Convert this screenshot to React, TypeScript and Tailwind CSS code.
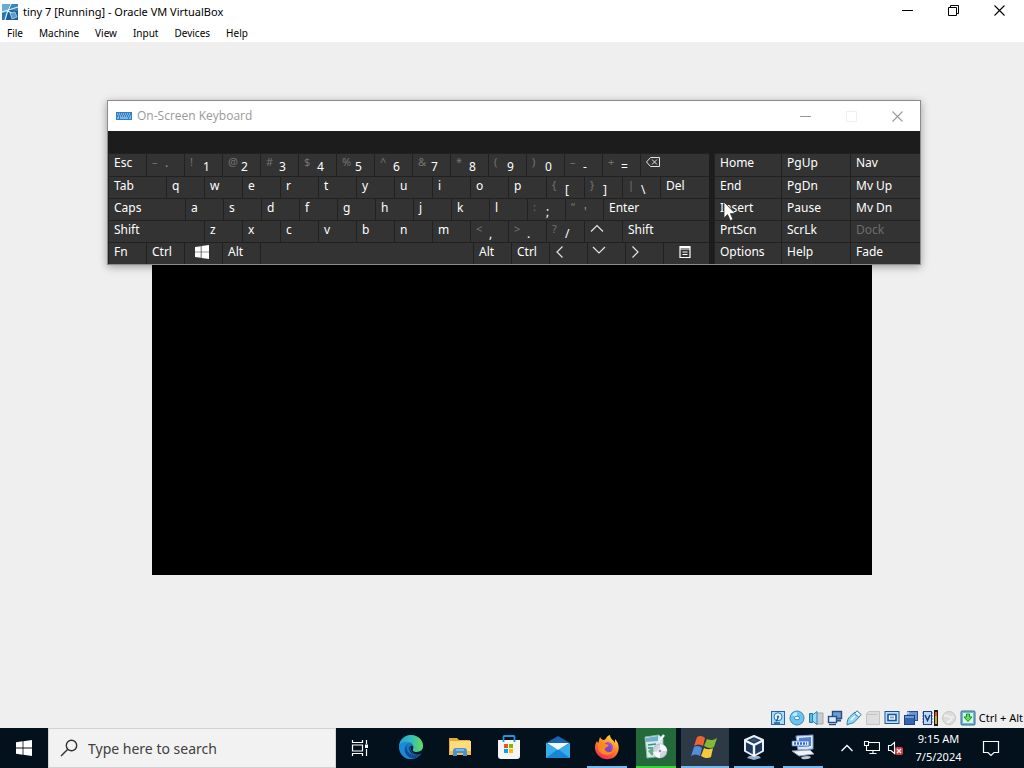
import type { ReactNode } from "react";

type KeyDef = {
  name: string;
  width: string;
  label?: string;
  shifted?: string;
  icon?: ReactNode;
  center?: boolean;
};

const UNIT = "w-[38px]";

const letters = (text: string): KeyDef[] =>
  text.split("").map((c) => ({ name: c, label: c, width: UNIT }));

const pair = (shifted: string, label: string): KeyDef => ({
  name: label,
  label,
  shifted,
  width: UNIT,
});

function Chevron({ d }: { d: string }) {
  return (
    <svg width="16" height="16" viewBox="0 0 16 16" fill="none" stroke="#e4e4e4" strokeWidth="1.2">
      <path d={d} />
    </svg>
  );
}

function WindowsLogo({ size }: { size: number }) {
  return (
    <svg width={size} height={size} viewBox="0 0 16 16" fill="#fff">
      <path d="M0 2.3 6.6 1.3V7.6H0zM7.4 1.2 16 0V7.6H7.4zM0 8.4H6.6V14.7L0 13.7zM7.4 8.4H16V16L7.4 14.8z" />
    </svg>
  );
}

const rows: KeyDef[][] = [
  [
    { name: "Escape", label: "Esc", width: "w-[38px]" },
    { name: "Backquote", label: "·", shifted: "–", width: UNIT },
    pair("!", "1"),
    pair("@", "2"),
    pair("#", "3"),
    pair("$", "4"),
    pair("%", "5"),
    pair("^", "6"),
    pair("&", "7"),
    pair("*", "8"),
    pair("(", "9"),
    pair(")", "0"),
    pair("–", "-"),
    pair("+", "="),
    {
      name: "Backspace",
      width: "flex-1",
      icon: (
        <svg width="16" height="16" viewBox="0 0 16 16" fill="none" stroke="#e4e4e4" strokeWidth="1">
          <path d="M5.5 3.5H14.5V12.5H5.5L1.5 8zM7 5.5 12 10.5M12 5.5 7 10.5" />
        </svg>
      ),
    },
  ],
  [
    { name: "Tab", label: "Tab", width: "w-[58px]" },
    ...letters("qwertyuiop"),
    pair("{", "["),
    pair("}", "]"),
    pair("|", "\\"),
    { name: "Delete", label: "Del", width: "flex-1" },
  ],
  [
    { name: "Caps Lock", label: "Caps", width: "w-[77px]" },
    ...letters("asdfghjkl"),
    pair(":", ";"),
    pair("“", "'"),
    { name: "Enter", label: "Enter", width: "flex-1" },
  ],
  [
    { name: "Left Shift", label: "Shift", width: "w-[96px]" },
    ...letters("zxcvbnm"),
    pair("<", ","),
    pair(">", "."),
    pair("?", "/"),
    { name: "Up", width: UNIT, icon: <Chevron d="M2 10.5 8 4.5 14 10.5" /> },
    { name: "Right Shift", label: "Shift", width: "flex-1" },
  ],
  [
    { name: "Function", label: "Fn", width: UNIT },
    { name: "Left Ctrl", label: "Ctrl", width: UNIT },
    { name: "Windows", width: UNIT, icon: <WindowsLogo size={14} />, center: true },
    { name: "Left Alt", label: "Alt", width: UNIT },
    { name: "Space", width: "w-[213px]" },
    { name: "Right Alt", label: "Alt", width: UNIT },
    { name: "Right Ctrl", label: "Ctrl", width: UNIT },
    { name: "Left", width: UNIT, icon: <Chevron d="M8.5 3.5 3 9 8.5 14.5" /> },
    { name: "Down", width: UNIT, icon: <Chevron d="M1 4 7 10 13 4" /> },
    { name: "Right", width: UNIT, icon: <Chevron d="M2.5 3.5 8 9 2.5 14.5" /> },
    {
      name: "Menu",
      width: "flex-1",
      center: true,
      icon: (
        <svg width="14" height="14" viewBox="0 0 14 14" fill="none" stroke="#fff" strokeWidth="1.2">
          <path d="M2 1.5H12V12.5H2zM2 4H12M4.5 7H9.5M4.5 9.5H9.5" />
          <path d="M2 2H12" strokeWidth="2" />
        </svg>
      ),
    },
  ],
];

const sideKeys = [
  ["Home", "PgUp", "Nav"],
  ["End", "PgDn", "Mv Up"],
  ["Insert", "Pause", "Mv Dn"],
  ["PrtScn", "ScrLk", "Dock"],
  ["Options", "Help", "Fade"],
];

function Key({ def }: { def: KeyDef }) {
  const quiet = def.label === "'" || def.label === "·";
  return (
    <button
      type="button"
      aria-label={def.name}
      className={`flex h-full shrink-0 border-t border-l border-[#212121] bg-[#333333] text-left leading-[18px] ${def.width} ${
        def.center ? "items-center justify-center pr-1 pb-[3px]" : "items-start pl-1"
      }`}
    >
      {def.shifted ? (
        <>
          <span className="w-[13px] pl-px text-[11px] leading-4 text-[#747474]">{def.shifted}</span>
          <span className={`pt-1 pl-px ${quiet ? "text-[#999999]" : ""}`}>{def.label}</span>
        </>
      ) : (
        (def.icon ?? <span className="pl-px">{def.label}</span>)
      )}
    </button>
  );
}

function Minimize() {
  return (
    <svg width="11" height="11" viewBox="0 0 11 11" stroke="currentColor" fill="none">
      <path d="M0 5.5H11" />
    </svg>
  );
}

function Close() {
  return (
    <svg width="11" height="11" viewBox="0 0 11 11" stroke="currentColor" strokeWidth="1.1" fill="none">
      <path d="M.5.5 10.5 10.5M10.5.5.5 10.5" />
    </svg>
  );
}

function OnScreenKeyboard() {
  return (
    <section
      aria-label="On-Screen Keyboard"
      className="absolute top-[58px] left-[107px] w-[814px] border border-[#8c8c8c] bg-[#1c1c1c] shadow-[0_2px_8px_rgba(0,0,0,0.35)]"
    >
      <header className="flex h-[30px] items-center bg-white pl-2 text-[#999999]">
        <svg width="16" height="10" viewBox="0 0 16 10">
          <rect y="1" width="16" height="8" fill="#2f7fc5" />
          <path d="M1 3H15" stroke="#d5e9f8" strokeDasharray="1 1" />
          <path d="M2 5H15" stroke="#d5e9f8" strokeDasharray="1 1" />
          <path d="M1 7H3M4 7H12M13 7H15" stroke="#d5e9f8" />
        </svg>
        <h2 className="flex-1 pl-[5px] font-['Open_Sans',sans-serif] text-xs">On-Screen Keyboard</h2>
        <button type="button" aria-label="Minimize keyboard" className="flex w-[46px] justify-center">
          <Minimize />
        </button>
        <button
          type="button"
          aria-label="Maximize keyboard"
          disabled
          className="flex w-[46px] justify-center text-[#eeeeee]"
        >
          <svg width="11" height="11" viewBox="0 0 11 11" stroke="currentColor" fill="none">
            <path d="M.5.5H10.5V10.5H.5z" />
          </svg>
        </button>
        <button type="button" aria-label="Close keyboard" className="flex w-[46px] justify-center">
          <Close />
        </button>
      </header>
      <div className="flex gap-[5px] pt-[22px] text-xs text-white">
        <div className="flex-1">
          {rows.map((row, i) => (
            <div key={i} className={`flex ${i === 0 ? "h-[23px]" : "h-[22px]"}`}>
              {row.map((def) => (
                <Key key={def.name} def={def} />
              ))}
            </div>
          ))}
        </div>
        <div className="w-[206px]">
          {sideKeys.map((row, i) => (
            <div key={i} className={`grid grid-cols-[67px_69px_1fr] ${i === 0 ? "h-[23px]" : "h-[22px]"}`}>
              {row.map((label) => (
                <button
                  key={label}
                  type="button"
                  disabled={label === "Dock"}
                  className={`flex items-start border-t border-l border-[#212121] bg-[#333333] pl-[5px] leading-[18px] ${
                    label === "Dock" ? "text-[#6d6d6d]" : ""
                  }`}
                >
                  {label}
                </button>
              ))}
            </div>
          ))}
        </div>
      </div>
      <svg className="absolute top-[100px] left-[615px]" width="14" height="22" viewBox="0 0 14 22">
        <path
          d="M1 1V17L4.6 13.6 7.3 19.6 10 18.4 7.4 12.6H12.3z"
          fill="#fff"
          stroke="#333"
          strokeWidth=".8"
        />
      </svg>
    </section>
  );
}

const statusIcons: { name: string; art: ReactNode }[] = [
  {
    name: "Hard disks",
    art: (
      <>
        <rect x="1.5" y="1.5" width="13" height="13" fill="#a9dcf5" stroke="#2765a8" />
        <circle cx="8" cy="6.8" r="4" fill="#e8f8ff" stroke="#2f6fb5" />
        <circle cx="8" cy="6.8" r="1.2" fill="#2565a8" />
        <path d="M4 13H10M8 8 6 11.5" stroke="#1e4f93" strokeWidth="1.3" />
      </>
    ),
  },
  {
    name: "Optical drives",
    art: (
      <>
        <circle cx="8" cy="8" r="7" fill="#69c5ee" stroke="#368cbe" />
        <path d="M3 5A6 6 0 0 1 8 2V8z" fill="#b9edff" />
        <ellipse cx="8" cy="8" rx="2.6" ry="1.8" fill="#fff" stroke="#368cbe" />
      </>
    ),
  },
  {
    name: "Audio",
    art: (
      <>
        <path d="M8 3H15V14H8z" fill="#c8cdd0" stroke="#a3a9ad" />
        <path d="M1.5 3.5H4.5V12.5H1.5z" fill="#58b7e4" stroke="#25759f" />
        <path d="M4.5 5 9 1.5V14.5L4.5 11z" fill="#91dcf8" stroke="#2c83b0" />
      </>
    ),
  },
  {
    name: "Network",
    art: (
      <>
        <rect x="5.5" y="1.5" width="9" height="7" fill="#6c9bd5" stroke="#274b83" strokeWidth="1.4" />
        <path d="M8 10.5H14" stroke="#274b83" strokeWidth="2" />
        <rect x="1.5" y="6.5" width="8" height="6" fill="#dcecff" stroke="#274b83" strokeWidth="1.4" />
        <path d="M2 14.5H9" stroke="#274b83" strokeWidth="1.4" />
      </>
    ),
  },
  {
    name: "USB",
    art: (
      <>
        <path d="M1 15C1 11 2 8 4 6.5L9 2 14 6 9 11.5C7 14 4 13 1 15z" fill="#90d6f1" stroke="#397fa6" />
        <path d="M11 .8 15.2 4.5 12.8 7.2 8.6 3.5z" fill="#e6f7fd" stroke="#397fa6" />
        <path d="M5 10 9 6" stroke="#fff" strokeWidth="1.4" />
      </>
    ),
  },
  {
    name: "Shared folders",
    art: <path d="M1.5 3.5 4 1.5H14.5V14.5H1.5zM1.5 4.5H12" fill="#dedede" stroke="#c4c4c4" />,
  },
  {
    name: "Display",
    art: (
      <>
        <rect x="1" y="1.5" width="14" height="12" fill="#b6e5fa" stroke="#234f93" />
        <rect x="4" y="4.5" width="8" height="6" fill="#fff" stroke="#234f93" strokeWidth="1.6" />
        <path d="M6 7.5H10" stroke="#6dacd8" strokeWidth="2" />
      </>
    ),
  },
  {
    name: "Recording",
    art: (
      <>
        <rect x="4.5" y="1.5" width="10" height="9" fill="#6a94d0" stroke="#294f96" />
        <rect x="1.5" y="5.5" width="10" height="9" fill="#3564ae" stroke="#1d4387" />
        <path d="M2 7H11" stroke="#b6d3f1" />
        <circle cx="5" cy="3" r="1.5" fill="#adcdf0" />
      </>
    ),
  },
  {
    name: "Processor",
    art: (
      <>
        <path d="M0 3H11M0 6H11M0 9H11M0 12H11" stroke="#5875b0" />
        <rect x="1.5" y="1.5" width="8" height="13" fill="#bad9f6" stroke="#243f87" />
        <path d="M3 5 5.5 10.5 8 5" fill="none" stroke="#19387e" strokeWidth="1.5" />
        <path d="M12 0H16V16H12z" fill="#241e16" />
        <path d="M14 2V14" stroke="#ead33f" strokeWidth="1.6" />
        <path d="M14 2V6" stroke="#e34125" strokeWidth="1.6" />
      </>
    ),
  },
  {
    name: "Mouse integration",
    art: (
      <>
        <circle cx="8" cy="8" r="6.5" fill="#dcdcdc" stroke="#c5c5c5" />
        <path d="M3 6C7 4 8 9 13 7M6 13 11 9" stroke="#efefef" strokeWidth="2" />
      </>
    ),
  },
  {
    name: "Keyboard capture",
    art: (
      <>
        <rect x="1" y="1" width="14" height="14" rx="1" fill="#6fb6d8" stroke="#386b90" />
        <rect x="3" y="3" width="10" height="10" fill="#d8f8d8" />
        <path d="M6.5 4H9.5V7H12L8 11.5 4 7H6.5z" fill="#5fe06a" stroke="#178b2d" />
      </>
    ),
  },
];

function EdgeIcon() {
  return (
    <svg width="26" height="26" viewBox="0 0 26 26">
      <defs>
        <linearGradient id="edge-top" x1="0" x2="1">
          <stop offset="0" stopColor="#249fdc" />
          <stop offset=".55" stopColor="#35c1b0" />
          <stop offset="1" stopColor="#69dc54" />
        </linearGradient>
      </defs>
      <circle cx="13" cy="13" r="12" fill="#1678c8" />
      <path d="M1 12C2 5 7 1 13 1C20 1 25 6 25 12C25 16 22 18 18 18C15 18 14 17 15 15C17 11 13 8 9 8C5 8 2 10 1 12z" fill="url(#edge-top)" />
      <path d="M9 10C4 15 9 23 17 24C8 28 1 20 1 12C2 9 6 8 9 8C12 8 14 9 15 11C12 9 10 9 9 10z" fill="#1a8bd8" />
      <path d="M10 10C6 14 10 21 17 21C20 21 22 20 24 19C21 24 15 26 11 23C5 19 6 13 10 10z" fill="#104a91" />
      <path d="M12.5 12C11 15 13 19 17 20C21 20 24 18 26 15V18C25 19 24 19.500 23.500 19.500C20 21 15 21 12.500 18C11 16 11 13 12.500 12zM15 15C14 17 16 18 18 18C21 18 24 17 25 14L26 18 21 20C17 21 12 18 12.500 12C14 11 16 12 15 15z" fill="#031521" />
    </svg>
  );
}

function FolderIcon() {
  return (
    <svg width="24" height="24" viewBox="0 0 24 24">
      <path d="M1 3H9L11 5H22V20H1z" fill="#e5aa37" />
      <path d="M2 6H23V20H2z" fill="#ffdc79" />
      <path d="M1 19V16H23V20H1z" fill="#f4bd48" />
      <path d="M5 21V16Q5 13 8 13H16Q19 13 19 16V21H15V18H9V21z" fill="#4b91cf" />
      <path d="M8 14H16V16H8z" fill="#75b9e8" />
    </svg>
  );
}

function StoreIcon() {
  return (
    <svg width="24" height="26" viewBox="0 0 24 26">
      <path d="M1 6H23V22Q23 25 20 25H4Q1 25 1 22z" fill="#f5f5f5" />
      <path d="M6.500 8V3Q6.500 2 7.500 2H16.500Q17.500 2 17.500 3V8" fill="none" stroke="#2493d8" strokeWidth="1.8" />
      <path d="M7 10H11V14H7z" fill="#f25022" />
      <path d="M12 10H16V14H12z" fill="#7fba00" />
      <path d="M7 15H11V19H7z" fill="#00a4ef" />
      <path d="M12 15H16V19H12z" fill="#ffb900" />
    </svg>
  );
}

function MailIcon() {
  return (
    <svg width="26" height="24" viewBox="0 0 26 24">
      <path d="M1 8 13 1 25 8V23H1z" fill="#1764b0" />
      <path d="M1 8 13 15 25 8V23H1z" fill="#38aee9" />
      <path d="M1 23 13 14 25 23z" fill="#1687d4" />
      <path d="M2 8H24L13 15z" fill="#eff9ff" />
    </svg>
  );
}

function FirefoxIcon() {
  return (
    <svg width="26" height="26" viewBox="0 0 26 26">
      <defs>
        <linearGradient id="fox" x1=".8" y1="0" x2=".3" y2="1">
          <stop offset="0" stopColor="#ffe34b" />
          <stop offset=".45" stopColor="#ff8b20" />
          <stop offset="1" stopColor="#f42455" />
        </linearGradient>
      </defs>
      <path d="M6 3C7 5 8 6 10 6C12 6 12 2 16 1C16 5 20 6 21 9L21 5C25 9 26 15 23 20C20 26 10 27 5 22C0 18 0 11 3 7L4 9C5 8 5 5 6 3z" fill="url(#fox)" />
      <circle cx="13" cy="14" r="5.5" fill="#8147c4" />
      <path d="M4 10C7 8 10 8 12 10L15 11C14 13 12 13 11 14C10 18 16 20 20 16C19 22 7 23 4 15z" fill="#ff8a25" />
      <path d="M13 9C16 9 19 11 18 15" fill="none" stroke="#b04fd0" strokeWidth="2" />
    </svg>
  );
}

function InstallerIcon() {
  return (
    <svg width="24" height="26" viewBox="0 0 24 26">
      <path d="M1 3 15 1 19 5V22L3 24z" fill="#d9ebe8" stroke="#8fb5b2" />
      <path d="M2 4 14 2V7L2 8z" fill="#6db0cf" />
      <path d="M4 11 12 10M4 14H9" stroke="#368f90" strokeWidth="1.5" />
      <path d="M4 17 8 14 11 18 8 22z" fill="#59b675" />
      <circle cx="16" cy="17" r="7" fill="#d0d5e4" stroke="#9ba6b8" strokeWidth=".7" />
      <path d="M16 10A7 7 0 0 1 23 17H16zM16 24A7 7 0 0 1 9 18L16 17z" fill="#f7f7ff" />
      <circle cx="16" cy="17" r="2" fill="#8d97a8" stroke="#fff" />
      <path d="M16 6 20 1" stroke="#f2faff" strokeWidth="2.500" />
    </svg>
  );
}

function FlagIcon() {
  return (
    <svg width="27" height="24" viewBox="0 0 27 24">
      <path d="M6 2C9 0 12 1 14 3L12 11C9 9 6 9 3 11z" fill="#ee6330" />
      <path d="M16 4C20 6 23 5 26 3L23 12C20 14 17 13 13 11z" fill="#83ba37" />
      <path d="M3 12C6 10 9 11 11 13L9 21C6 19 3 19 0 21z" fill="#538ddd" />
      <path d="M13 13C17 15 20 14 22 13L20 22C17 24 13 23 10 21z" fill="#f4ca3b" />
    </svg>
  );
}

function BoxIcon() {
  return (
    <svg width="24" height="26" viewBox="0 0 24 26">
      <path d="M7 22H17L19 24 12 26 5 24z" fill="#8fb0cc" />
      <path d="M12 2 21 6V17L12 22 3 17V6z" fill="#1d3858" stroke="#e6eef6" strokeWidth="2" strokeLinejoin="round" />
      <path d="M3 6.500 12 11 21 6.500M12 11V22" fill="none" stroke="#f0f7ff" strokeWidth="2.400" />
      <path d="M8 6.500 12 4.600 16 6.500 12 8.400z" fill="#31527a" />
    </svg>
  );
}

function RemoteIcon() {
  return (
    <svg width="24" height="26" viewBox="0 0 24 26">
      <path d="M5 2 22 1V15L7 16z" fill="#dce8f8" stroke="#7f98bf" />
      <path d="M8 4 20 3V12L8 13z" fill="#4f80d8" />
      <path d="M1 7H18V12H1z" fill="#eaf1ff" stroke="#4373c3" strokeWidth=".8" />
      <path d="M3 9.500H16" stroke="#3268c7" strokeDasharray="2 1" strokeWidth="2.400" />
      <path d="M11 15H17V18H11z" fill="#9ab0c9" />
      <path d="M1 17 19 16 23 20 8 22z" fill="#eff3fa" stroke="#8a9db5" />
      <path d="M10 23Q18 21 20 23 18 26 11 25z" fill="#b7c7dc" />
    </svg>
  );
}

const apps: { name: string; icon: ReactNode; line: string; tile: string }[] = [
  { name: "Microsoft Edge", icon: <EdgeIcon />, line: "border-transparent", tile: "" },
  { name: "File Explorer", icon: <FolderIcon />, line: "border-transparent", tile: "" },
  { name: "Microsoft Store", icon: <StoreIcon />, line: "border-transparent", tile: "" },
  { name: "Mail", icon: <MailIcon />, line: "border-transparent", tile: "" },
  { name: "Firefox", icon: <FirefoxIcon />, line: "border-[#76b9ed]", tile: "w-10" },
  { name: "Installer", icon: <InstallerIcon />, line: "border-[#3bd336]", tile: "w-10 bg-[#23693a]" },
  { name: "tiny 7", icon: <FlagIcon />, line: "border-[#76b9ed]", tile: "w-12 bg-[#2d3945]" },
  { name: "Oracle VM VirtualBox", icon: <BoxIcon />, line: "border-[#76b9ed]", tile: "w-10" },
  { name: "Remote Desktop", icon: <RemoteIcon />, line: "border-[#76b9ed]", tile: "w-10" },
];

function Taskbar() {
  return (
    <footer className="flex h-10 bg-[#03111d] text-white">
      <button type="button" aria-label="Start" className="flex w-12 items-center justify-center">
        <WindowsLogo size={16} />
      </button>
      <label className="flex w-72 items-center gap-2 border border-[#cfd3d5] bg-[#f2f2f2] pl-[11px] text-[#303030]">
        <svg width="20" height="18" viewBox="0 0 20 18" fill="none" stroke="#303030" strokeWidth="1.4">
          <circle cx="11.5" cy="6.5" r="5.2" />
          <path d="M7.8 10.2 1 17" />
        </svg>
        <input
          type="text"
          aria-label="Search"
          placeholder="Type here to search"
          className="h-6 min-w-0 flex-1 bg-transparent text-sm outline-none placeholder:text-[#404040]"
        />
      </label>
      <button type="button" aria-label="Task View" className="flex w-[50px] items-center justify-center pr-[3px]">
        <svg width="18" height="18" viewBox="0 0 18 18" fill="none" stroke="#fff" strokeWidth="1.2">
          <path d="M1.5 1V3.5H11.5V1M1.5 6H11.5V12H1.5zM1.5 17V14.5H11.5V17M15.5 1V5M15.5 10V17" />
          <path d="M14 5.5H17V9H14z" fill="#fff" stroke="none" />
        </svg>
      </button>
      <nav aria-label="Applications" className="flex">
        {apps.map((app) => (
          <div key={app.name} className="flex w-[49px] justify-center">
            <button
              type="button"
              aria-label={app.name}
              className={`flex items-center justify-center border-b-2 ${app.line} ${app.tile}`}
            >
              {app.icon}
            </button>
          </div>
        ))}
      </nav>
      <div className="ml-auto flex items-center">
        <button type="button" aria-label="Show hidden icons" className="flex w-6 justify-center">
          <svg width="12" height="8" viewBox="0 0 12 8" fill="none" stroke="#fff" strokeWidth="1.3">
            <path d="M.5 7 6 1.5 11.5 7" />
          </svg>
        </button>
        <button type="button" aria-label="Network" className="flex w-6 justify-center">
          <svg width="17" height="16" viewBox="0 0 17 16" fill="none" stroke="#fff" strokeWidth="1.1">
            <path d="M5.5 2.5H16.5V10.5H3.5V6M1.5 1.5H5.5V5.5H1.5zM10 10.5V13.5M6.5 13.5H13.5" />
          </svg>
        </button>
        <button type="button" aria-label="Volume muted" className="flex w-6 justify-center">
          <svg width="18" height="16" viewBox="0 0 18 16" fill="none">
            <path d="M2.5 5.5H5L8.5 2.5V13.5L5 10.5H2.5z" stroke="#fff" strokeWidth="1.1" />
            <rect x="9" y="7" width="8" height="8" rx="2" fill="#d83b45" />
            <path d="M11 9 15 13M15 9 11 13" stroke="#fff" strokeWidth="1.2" />
          </svg>
        </button>
        <time className="w-[63px] text-center text-[11px] leading-[18px]">
          9:15 AM
          <br />
          7/5/2024
        </time>
        <button type="button" aria-label="Notifications" className="mr-3 flex w-[42px] justify-center">
          <svg width="18" height="18" viewBox="0 0 18 18" fill="none" stroke="#fff" strokeWidth="1.2">
            <path d="M1.5 2.5H16.5V13.5H12L9 16.5 6 13.5H1.5z" />
          </svg>
        </button>
      </div>
    </footer>
  );
}

export default function App() {
  return (
    <div className="flex min-h-screen flex-col overflow-hidden bg-[#efefef] font-['Noto_Sans','Open_Sans',sans-serif] text-black">
      <header className="bg-white">
        <div className="flex h-6 items-center pr-[2px] pl-[2px]">
          <svg width="16" height="16" viewBox="0 0 16 16">
            <rect width="16" height="16" fill="#1b5f96" />
            <path d="M0 0H8L5 8 0 9z" fill="#64add8" />
            <path d="M9 0H16V7L8 6z" fill="#3b86bd" />
            <path d="M0 10 6 8 4 16H0z" fill="#2979b4" />
            <path d="M9 0 5 9 3 16M0 8 16 3M6 7 13 11" fill="none" stroke="#e5f5fc" strokeWidth="1.1" />
            <path d="M8 9 13 8 15 13 10 15z" fill="#5a9dca" stroke="#c3def0" strokeWidth=".7" />
          </svg>
          <h1 className="flex-1 pl-[5px] text-[11px]">tiny 7 [Running] - Oracle VM VirtualBox</h1>
          <button type="button" aria-label="Minimize" className="flex w-[46px] justify-center pb-1">
            <Minimize />
          </button>
          <button type="button" aria-label="Restore" className="flex w-[46px] justify-center pb-1">
            <svg width="11" height="11" viewBox="0 0 11 11" stroke="currentColor" fill="none">
              <path d="M.5 2.5H8.5V10.5H.5zM2.5 2.5V.5H10.5V8.5H8.5" />
            </svg>
          </button>
          <button type="button" aria-label="Close" className="flex w-[46px] justify-center pb-1">
            <Close />
          </button>
        </div>
        <nav aria-label="Machine menu" className="flex h-[18px] items-center gap-4 pl-[7px] text-[10px]">
          {["File", "Machine", "View", "Input", "Devices", "Help"].map((item) => (
            <button key={item} type="button">
              {item}
            </button>
          ))}
        </nav>
      </header>
      <main className="relative flex flex-1 items-center justify-center">
        <div aria-label="Guest display" className="h-[400px] w-[720px] bg-black" />
        <OnScreenKeyboard />
      </main>
      <div className="flex h-5 items-center justify-end gap-[3px] pr-px text-[11px]">
        {statusIcons.map((icon) => (
          <button key={icon.name} type="button" aria-label={icon.name}>
            <svg width="16" height="16" viewBox="0 0 16 16" fill="none">
              {icon.art}
            </svg>
          </button>
        ))}
        <span className="whitespace-nowrap">Ctrl + Alt</span>
      </div>
      <Taskbar />
    </div>
  );
}
